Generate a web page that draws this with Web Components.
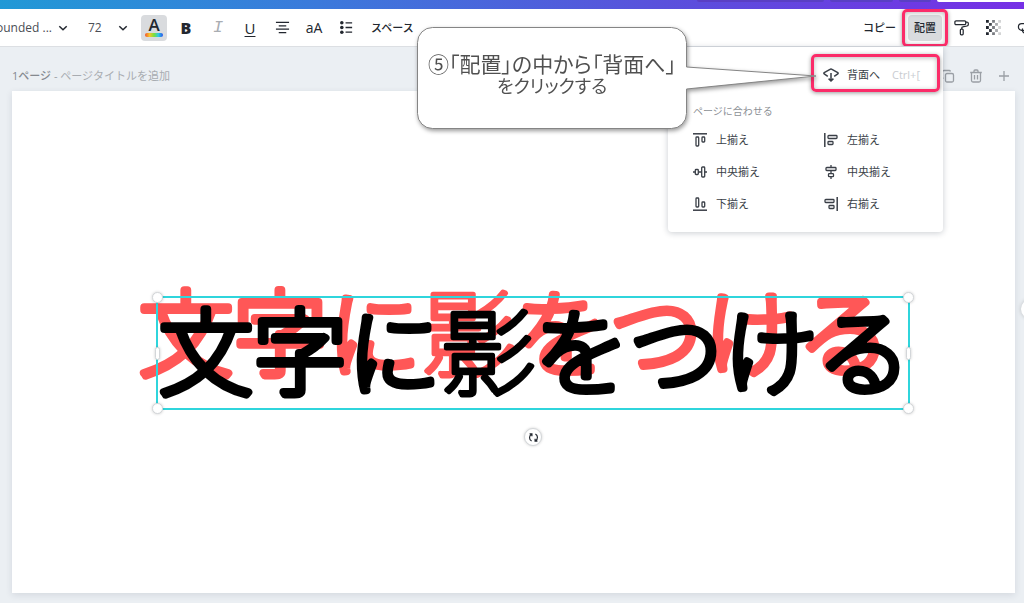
<!DOCTYPE html>
<html lang="ja">
<head>
<meta charset="utf-8">
<title>デザインエディター</title>
<style>
  html, body { margin: 0; min-height: 100%; }
  body {
    background: #ebeff3;
    color: #22272f;
    font: 11px/16px "Open Sans", "Noto Sans CJK JP", sans-serif;
    overflow: hidden;
  }
</style>
</head>
<body>
<editor-app></editor-app>

<script>
const define = (name, html, setup) => {
  const template = document.createElement('template');
  template.innerHTML = html;
  customElements.define(name, class extends HTMLElement {
    constructor() {
      super();
      this.attachShadow({ mode: 'open' }).append(template.content.cloneNode(true));
    }
    connectedCallback() { if (setup) setup(this, this.shadowRoot); }
  });
};

const ICONS = {
  center: ['0 0 16 16', '<path d="M1 2.5h14M4 6.2h8M1 9.8h14M4 13.5h8" stroke-width="1.4"/>'],
  list: ['0 0 16 16', '<path d="M7 3h7M7 8h7M7 13h7" stroke-width="1.4"/><g fill="currentColor" stroke="none"><circle cx="3" cy="3" r="1.9"/><circle cx="3" cy="8" r="1.9"/><circle cx="3" cy="13" r="1.9"/></g>'],
  roller: ['0 0 18 18', '<rect x="2" y="2" width="11.5" height="4" rx="1.2"/><path d="M13.5 3.2h1.2a1.5 1.5 0 0 1 1.5 1.5v1.2a1.5 1.5 0 0 1-1.3 1.5l-4.6.9a1.2 1.2 0 0 0-1 1.2v1.2"/><rect x="7.8" y="10.7" width="3" height="6" rx="1"/>'],
  checker: ['0 0 16 16', '<g stroke="none" fill="currentColor"><path d="M0 0h3v3H0zM0 6.500h3v3H0zM0 13h3v3H0z"/><path opacity=".85" d="M3.200 3.200h3v3h-3zM3.200 9.700h3v3h-3z"/><path opacity=".6" d="M6.500 0h3v3h-3zM6.500 6.500h3v3h-3zM6.500 13h3v3h-3z"/><path opacity=".4" d="M9.700 3.200h3v3h-3zM9.700 9.700h3v3h-3z"/><path opacity=".2" d="M13 0h3v3h-3zM13 6.500h3v3h-3zM13 13h3v3h-3z"/></g>'],
  link: ['0 0 18 18', '<path d="M8 12H5a3.500 3.500 0 0 1 0-7h5a3.500 3.500 0 0 1 3 5"/><path d="M10 8h3a3.500 3.500 0 0 1 0 7H9a3.500 3.500 0 0 1-3-5"/>'],
  chevron: ['0 0 10 10', '<path d="M1.300 3.200 5 6.800l3.700-3.600" stroke-width="1.500"/>'],
  backward: ['0 0 16 16', '<path d="M4.800 9.300 1.200 6.900a.7.700 0 0 1 0-1.200L7.500 2.200a1 1 0 0 1 1 0l6.300 3.500a.7.700 0 0 1 0 1.200l-3.600 2.400" stroke-width="1.500"/><path d="M8 6v8M5.600 11.600 8 14l2.400-2.400" stroke-width="1.500"/>'],
  top: ['0 0 14 14', '<path d="M0 .8h14" stroke-width="1.500"/><rect x="3" y="4" width="2.700" height="9" rx=".8"/><rect x="9" y="4" width="2.700" height="5" rx=".8"/>'],
  middle: ['0 0 14 14', '<path d="M0 7h2.300M5.500 7h3.200M11.700 7H14"/><rect x="2.300" y="4.500" width="3" height="5" rx=".8"/><rect x="8.700" y="2" width="3" height="10" rx=".8"/>'],
  bottom: ['0 0 14 14', '<path d="M0 13.200h14" stroke-width="1.500"/><rect x="3" y="1" width="2.700" height="9" rx=".8"/><rect x="9" y="5" width="2.700" height="5" rx=".8"/>'],
  left: ['0 0 14 14', '<path d="M.8 0v14" stroke-width="1.500"/><rect x="4" y="2.500" width="9" height="3" rx=".8"/><rect x="4" y="8.500" width="5" height="3" rx=".8"/>'],
  hcenter: ['0 0 14 14', '<path d="M7 0v2.500M7 5.500v3.200M7 11.700V14"/><rect x="2" y="2.500" width="10" height="3" rx=".8"/><rect x="4.500" y="8.700" width="5" height="3" rx=".8"/>'],
  right: ['0 0 14 14', '<path d="M13.200 0v14" stroke-width="1.500"/><rect x="1" y="2.500" width="9" height="3" rx=".8"/><rect x="5" y="8.500" width="5" height="3" rx=".8"/>'],
  copy: ['0 0 14 14', '<rect x="4.500" y="4.500" width="8" height="8.500" rx="1.500"/><path d="M2.500 9.500A1.500 1.500 0 0 1 1.500 8V3A1.500 1.500 0 0 1 3 1.500h5A1.500 1.500 0 0 1 9.500 2.500"/>'],
  trash: ['0 0 14 14', '<path d="M1.200 3.500h11.600M5 3.300V2a1 1 0 0 1 1-1h2a1 1 0 0 1 1 1v1.300M2.500 3.700v7.800A1.500 1.500 0 0 0 4 13h6a1.500 1.500 0 0 0 1.500-1.500V3.700M5.500 6v4.500M8.500 6v4.500"/>'],
  plus: ['0 0 14 14', '<path d="M7 2v10M2 7h10"/>'],
  rotate: ['0 0 14 14', '<path d="M4.600 11.500A5 5 0 0 1 4.400 2.800M9.400 2.500a5 5 0 0 1 .2 8.700M2 2.300h3v3M12 11.700H9v-3" stroke-width="1.500"/>'],
};

define('ui-icon', `
  <style>
    :host { display: block; flex: none; width: var(--icon-size, 14px); height: var(--icon-size, 14px); }
    svg { display: block; width: 100%; height: 100%; fill: none; stroke: currentColor; stroke-width: 1.300; overflow: visible; }
  </style><svg aria-hidden="true"></svg>`,
  (host, root) => {
    const icon = ICONS[host.getAttribute('name')];
    if (!icon) return;
    const svg = root.querySelector('svg');
    svg.setAttribute('viewBox', icon[0]);
    svg.innerHTML = icon[1];
  });

/* Pink frame that draws attention to its parent control. */
define('focus-ring', `
  <style>
    :host {
      position: absolute; inset: var(--ring-inset, -6px); box-sizing: border-box;
      border: 3px solid #fb2c69; border-radius: 5px; pointer-events: none;
      box-shadow: 0 1px 4px #0006, inset 0 1px 5px #0004;
    }
  </style>`);

define('brand-bar', `
  <style>
    :host {
      display: flex; justify-content: flex-end; gap: 6px; height: 9px;
      background: linear-gradient(90deg, #2199d6, #3a7bdb 30%, #5a50dc 65%, #7630e6);
    }
    i { height: 2px; border-radius: 0 0 3px 3px; background: #5a3fc4; }
    .a { width: 127px; } .b { width: 63px; } .c { width: 32px; }
    .d { width: 87px; background: #fff; border-radius: 0 0 0 3px; }
  </style><i class="a"></i><i class="b"></i><i class="c"></i><i class="d"></i>`);

define('tool-button', `
  <style>
    :host { display: block; position: relative; flex: none; }
    button {
      display: flex; flex-direction: column; align-items: center; justify-content: center;
      min-width: 26px; height: 26px; padding: 0; border: 0; border-radius: 4px;
      background: none; color: inherit; font: inherit; white-space: nowrap;
    }
    :host([wide]) button { padding: 0 6px; font-weight: 500; }
    :host([active]) button { background: #d9dbde; }
    :host([disabled]) { color: #a9adb2; }
  </style><button type="button"><slot></slot></button><slot name="over"></slot>`,
  (host, root) => {
    const b = root.querySelector('button');
    if (host.title) b.setAttribute('aria-label', host.title);
    b.disabled = host.hasAttribute('disabled');
  });

define('tool-select', `
  <style>
    :host { display: grid; align-items: center; flex: none; color: #4a4e55; }
    select {
      grid-area: 1 / 1; appearance: none; width: 100%; height: 26px; border: 0; padding: 0;
      background: none; color: inherit; font: 12px/16px "Open Sans", sans-serif;
    }
    ui-icon { grid-area: 1 / 1; justify-self: end; --icon-size: 10px; color: #22272f; pointer-events: none; }
  </style><select><option></option></select><ui-icon name="chevron"></ui-icon>`,
  (host, root) => {
    root.querySelector('select').setAttribute('aria-label', host.getAttribute('label'));
    root.querySelector('option').textContent = host.getAttribute('value');
  });

define('editor-toolbar', `
  <style>
    :host {
      display: flex; align-items: center; gap: 6px; height: 38px; box-sizing: border-box;
      background: #fff; border-bottom: 1px solid #dcdfe3; overflow: hidden; color: #22272f;
    }
    .font { width: 72px; margin-left: -4px; }
    .size { width: 40px; margin: 0 7px 0 14px; }
    .letter { font-size: 17px; line-height: 14px; font-weight: 600; }
    .rainbow { width: 18px; height: 4px; border-radius: 2px; margin-top: 1px;
      background: linear-gradient(90deg, #f0502c, #f7c52b, #7be03a, #2cc8e8, #2a4fe8); }
    .bold { font-size: 16px; font-weight: 800; }
    .italic { font: italic 17px/18px "Liberation Mono", monospace; }
    .underline { font-size: 15px; text-decoration: underline; text-underline-offset: 2px; }
    .case { font-size: 14px; }
    .right { display: flex; gap: 6px; margin: 0 -14px 0 auto; }
    ui-icon { --icon-size: 15px; }
    .large { --icon-size: 17px; }
  </style>
  <tool-select class="font" label="フォント" value="ounded ..."></tool-select>
  <tool-select class="size" label="フォントサイズ" value="72"></tool-select>
  <tool-button active title="文字の色"><span class="letter">A</span><span class="rainbow"></span></tool-button>
  <tool-button title="太字"><span class="bold">B</span></tool-button>
  <tool-button title="斜体" disabled><span class="italic">I</span></tool-button>
  <tool-button title="下線"><span class="underline">U</span></tool-button>
  <tool-button title="整列"><ui-icon name="center"></ui-icon></tool-button>
  <tool-button title="大文字"><span class="case">aA</span></tool-button>
  <tool-button title="リスト"><ui-icon name="list"></ui-icon></tool-button>
  <tool-button wide>スペース</tool-button>
  <div class="right">
    <tool-button wide>コピー</tool-button>
    <tool-button wide active>配置<focus-ring slot="over"></focus-ring></tool-button>
    <tool-button title="スタイルをコピー"><ui-icon class="large" name="roller"></ui-icon></tool-button>
    <tool-button title="透明度"><ui-icon name="checker"></ui-icon></tool-button>
    <tool-button title="リンク"><ui-icon class="large" name="link"></ui-icon></tool-button>
  </div>`);

define('page-header', `
  <style>
    :host { display: flex; align-items: center; justify-content: space-between; height: 30px; color: #9a9fa5; }
    p { margin: 0; } b { font-weight: 500; color: #85898f; } span { color: #a8acb1; }
    nav { display: flex; gap: 6px; }
    button { display: grid; place-items: center; width: 22px; height: 22px; padding: 0; border: 0; background: none; color: inherit; }
  </style>
  <p><b>1ページ</b> - <span>ページタイトルを追加</span></p>
  <nav>
    <button aria-label="ページを複製"><ui-icon name="copy"></ui-icon></button>
    <button aria-label="ページを削除"><ui-icon name="trash"></ui-icon></button>
    <button aria-label="ページを追加"><ui-icon name="plus"></ui-icon></button>
  </nav>`);

define('design-text', `
  <style>
    :host { position: absolute; width: 752px; height: 112px; color: #000; }
    svg { display: block; width: 100%; height: 100%; overflow: visible; }
    text {
      font: 100 94px "Noto Sans CJK JP", sans-serif; fill: currentColor;
      stroke: currentColor; stroke-width: 8; stroke-linejoin: round; stroke-linecap: round;
    }
    .dense { stroke-width: 5; }
  </style><svg><text x="2" y="91"></text></svg>`,
  (host, root) => {
    root.querySelector('text').innerHTML =
      host.getAttribute('text').replace(/影/g, '<tspan class="dense">$&</tspan>');
  });

define('selection-frame', `
  <style>
    :host { position: absolute; width: 754px; height: 114px; box-sizing: border-box; border: 2px solid #2fd5dc; }
    i { position: absolute; box-sizing: border-box; background: #fff; border: 1px solid #d3d6d9; box-shadow: 0 0 3px #0003; }
    .corner { width: 11px; height: 11px; border-radius: 50%; }
    .side { width: 5px; height: 13px; border-radius: 3px; top: 49px; }
    .t { top: -6px; } .b { bottom: -6px; } .l { left: -6px; } .r { right: -6px; }
    .side.l, .side.r { margin: 0 3px; }
    button {
      position: absolute; left: 50%; top: 130px; width: 18px; height: 18px; margin-left: -9px; padding: 0;
      display: grid; place-items: center; border: 1px solid #d3d6d9; border-radius: 50%;
      background: #fff; color: #22272f; box-shadow: 0 0 3px #0003; --icon-size: 11px;
    }
  </style>
  <i class="corner t l"></i><i class="corner t r"></i><i class="corner b l"></i><i class="corner b r"></i>
  <i class="side l"></i><i class="side r"></i>
  <button aria-label="回転"><ui-icon name="rotate"></ui-icon></button>`);

define('design-page', `
  <style>
    :host { display: block; position: relative; aspect-ratio: 2 / 1; background: #fff; box-shadow: 0 2px 7px #1e28401c; }
    .shadow { left: 125px; top: 187px; color: #ff5757; }
    .main { left: 145px; top: 206px; }
    selection-frame { left: 144px; top: 205px; }
  </style>
  <design-text class="shadow" text="文字に影をつける"></design-text>
  <design-text class="main" text="文字に影をつける"></design-text>
  <selection-frame></selection-frame>`);

define('menu-item', `
  <style>
    :host { display: block; position: relative; }
    button {
      display: flex; align-items: center; gap: 9px; width: 100%; height: 32px; padding: 0; border: 0;
      background: none; color: inherit; font: inherit; white-space: nowrap;
    }
    kbd { margin-left: 4px; font: inherit; color: #c9ccd1; }
    :host([layer]) button { gap: 8px; }
    :host([layer]) ui-icon { --icon-size: 16px; margin-left: -1px; }
  </style><button type="button" role="menuitem"><slot></slot></button><slot name="over"></slot>`,
  (host, root) => {
    const button = root.querySelector('button');
    const icon = document.createElement('ui-icon');
    icon.setAttribute('name', host.getAttribute('icon'));
    button.prepend(icon);
    if (host.hasAttribute('key')) {
      const key = document.createElement('kbd');
      key.textContent = host.getAttribute('key');
      button.append(key);
    }
  });

define('arrange-menu', `
  <style>
    :host {
      display: block; box-sizing: border-box; width: 275px; padding: 12px 0 12px 25px;
      background: #fff; border-radius: 0 0 4px 4px; box-shadow: 0 1px 6px #0f1a2e38; color: #3a3f47;
    }
    .grid { display: grid; grid-template-columns: 131px 119px; }
    .second { grid-column: 2; }
    h2 { margin: 12px 0 5px; font: 400 10px/16px "Noto Sans CJK JP", sans-serif; color: #8d9196; }
    focus-ring { --ring-inset: -5px 3px -1px -13px; }
  </style>
  <div class="grid">
    <menu-item class="second" layer icon="backward" key="Ctrl+[">背面へ<focus-ring slot="over"></focus-ring></menu-item>
  </div>
  <h2>ページに合わせる</h2>
  <div class="grid">
    <menu-item icon="top">上揃え</menu-item><menu-item icon="left">左揃え</menu-item>
    <menu-item icon="middle">中央揃え</menu-item><menu-item icon="hcenter">中央揃え</menu-item>
    <menu-item icon="bottom">下揃え</menu-item><menu-item icon="right">右揃え</menu-item>
  </div>`);

define('callout-bubble', `
  <style>
    :host { display: block; width: 270px; height: 102px; filter: drop-shadow(1px 2px 2px #0006); }
    svg { position: absolute; inset: 0; overflow: visible; fill: #fff; stroke: #858585; }
    .text {
      position: relative; display: grid; justify-items: center; padding-top: 25px; color: #505050; white-space: nowrap;
      font: 400 21px/22px "Noto Sans CJK JP", sans-serif; font-feature-settings: "palt";
    }
    ::slotted(p) { margin: 0; }
    ::slotted(.kana) { font-size: 18px; }
  </style>
  <svg width="270" height="102" aria-hidden="true">
    <path d="M15.500.5h239a15 15 0 0 1 15 15V40L399 49 269.500 62V86.500a15 15 0 0 1-15 15h-239a15 15 0 0 1-15-15v-71a15 15 0 0 1 15-15z"/>
  </svg>
  <div class="text"><slot></slot></div>`);

define('editor-app', `
  <style>
    :host { display: block; position: relative; min-height: 603px; overflow: hidden; }
    main { padding: 14px 9px 12px 12px; }
    arrange-menu { position: absolute; right: 81px; top: 47px; }
    callout-bubble { position: absolute; right: 337px; top: 27px; }
    .handle {
      position: absolute; right: -17px; top: 299px; width: 20px; height: 20px; padding: 0;
      border: 0; border-radius: 50%; background: #fff; box-shadow: 0 0 4px #0003;
    }
  </style>
  <brand-bar></brand-bar>
  <editor-toolbar></editor-toolbar>
  <main>
    <page-header></page-header>
    <design-page></design-page>
  </main>
  <button class="handle" aria-label="パネルを開く"></button>
  <arrange-menu role="menu"></arrange-menu>
  <callout-bubble><p>⑤「配置」の中から「背面へ」</p><p class="kana">をクリックする</p></callout-bubble>`);
</script>
</body>
</html>
